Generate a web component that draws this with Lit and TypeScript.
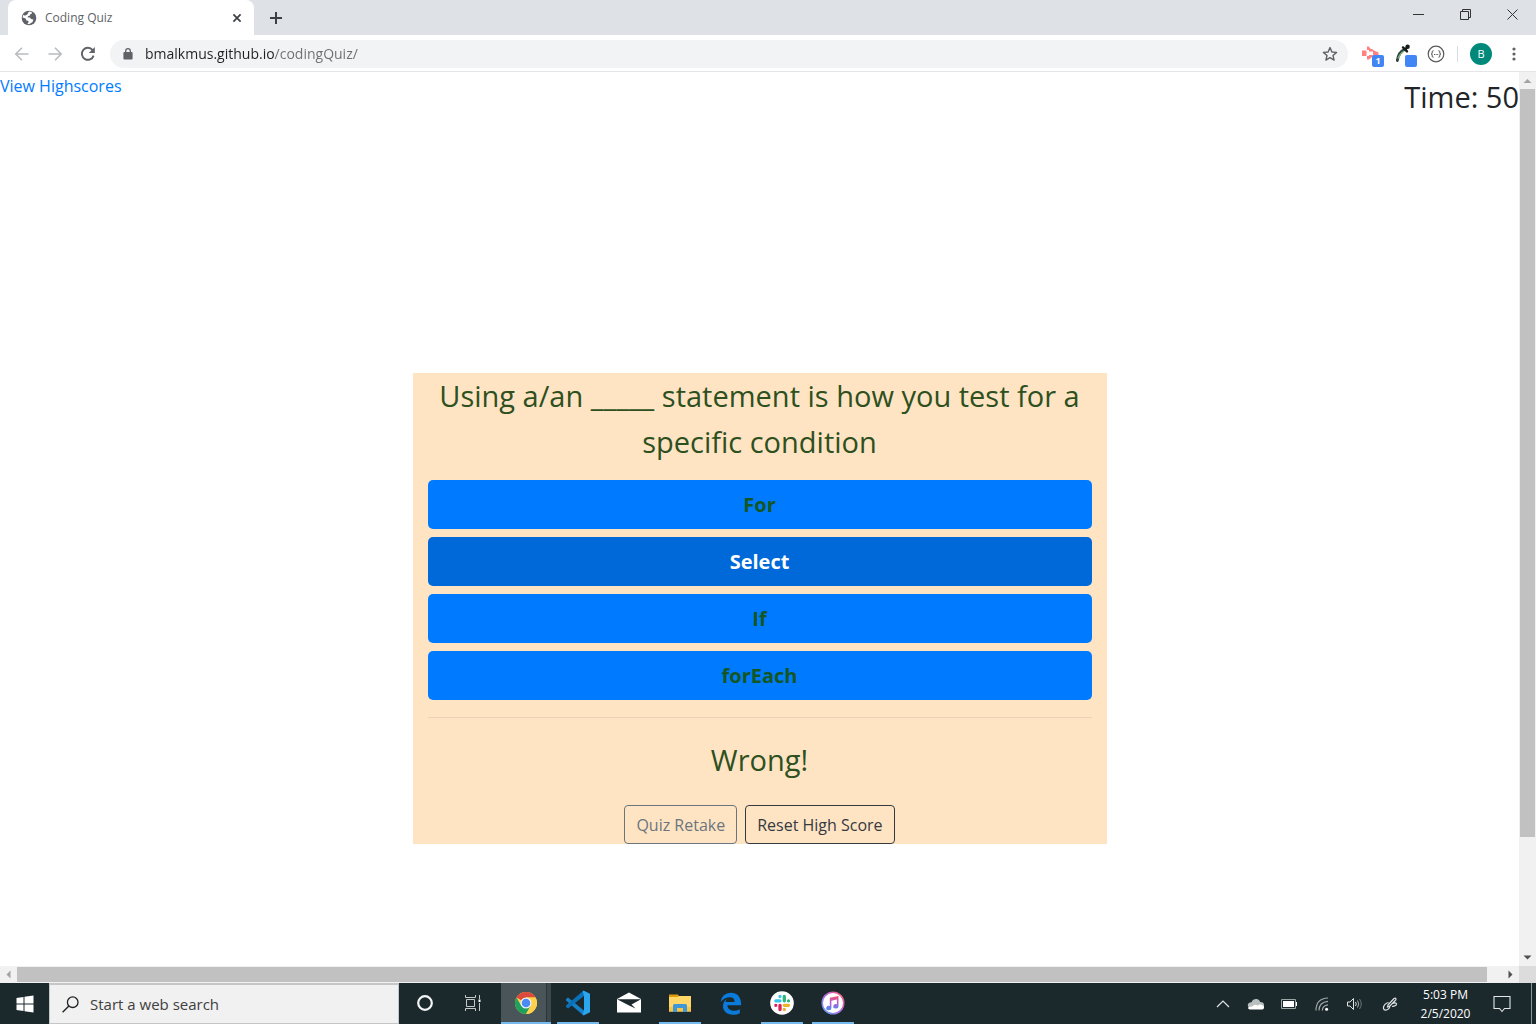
import { LitElement, html, svg, css } from "lit";
import { customElement, property, state } from "lit/decorators.js";
import { classMap } from "lit/directives/class-map.js";

const fontStack = css`"Segoe UI", "Open Sans", "Noto Sans", sans-serif`;

const reset = css`
  * {
    box-sizing: border-box;
  }
  button {
    margin: 0;
    padding: 0;
    border: 0;
    background: none;
    font: inherit;
    color: inherit;
    display: flex;
    align-items: center;
    justify-content: center;
    flex-shrink: 0;
  }
  svg {
    display: block;
    flex-shrink: 0;
    overflow: visible;
  }
`;

@customElement("browser-chrome")
export class BrowserChrome extends LitElement {
  @property() pageTitle = "";
  @property() url = "";

  static styles = [
    reset,
    css`
      :host {
        display: block;
        font-family: ${fontStack};
      }
      .tabs {
        display: flex;
        height: 35px;
        padding-left: 8px;
        background: #dee1e6;
      }
      .tab {
        display: flex;
        align-items: center;
        width: 246px;
        padding: 0 9px 0 13px;
        gap: 8px;
        background: #fff;
        border-radius: 8px 8px 0 0;
        font-size: 12px;
        color: #5f6368;
      }
      .tab-title {
        flex: 1;
      }
      .tab-close,
      .new-tab {
        width: 16px;
      }
      .new-tab {
        margin-left: 14px;
      }
      .window-controls {
        display: flex;
        margin-left: auto;
        height: 29px;
      }
      .window-controls button {
        width: 47px;
      }
      .toolbar {
        display: flex;
        align-items: center;
        height: 37px;
        padding: 1px 12px 0 5px;
        background: #fff;
        border-bottom: 1px solid #e4e5e7;
      }
      .nav {
        width: 33px;
        height: 32px;
      }
      .address {
        display: flex;
        align-items: center;
        flex: 1;
        height: 28px;
        margin-left: 6px;
        padding: 0 10px 0 12px;
        gap: 11px;
        border-radius: 14px;
        background: #f1f3f4;
      }
      .address input {
        flex: 1;
        min-width: 0;
        border: 0;
        padding: 0;
        outline: 0;
        font-family: inherit;
        font-size: 14px;
        line-height: 20px;
        background: linear-gradient(90deg, #202124 129px, #6b6f73 129px);
        background-clip: text;
        -webkit-background-clip: text;
        -webkit-text-fill-color: transparent;
      }
      .extensions {
        display: flex;
        align-items: center;
        gap: 9px;
        padding-left: 13px;
      }
      .divider {
        width: 1px;
        height: 16px;
        margin: 0 3px;
        background: #dadce0;
      }
      .avatar {
        width: 22px;
        height: 22px;
        border-radius: 50%;
        background: #00897b;
        color: #fff;
        font-size: 11px;
      }
      .menu {
        width: 20px;
        margin-left: 3px;
      }
    `,
  ];

  render() {
    return html`
      <div class="tabs">
        <div class="tab">
          <svg width="16" height="16" viewBox="0 0 16 16" aria-hidden="true">
            <circle cx="8" cy="8" r="7.3" fill="#5f6368" />
            <path d="M8.6 1.6 10.6 2 11 3.4 9.2 4.2 9 5.6 7 6.2 6.6 7.4 9 7.6 10 9 12.4 9.4 11.6 12 9.6 13.2 8 14.2 6.4 13.8 7.6 12.2 7.2 10.8 5.4 10.4 4.6 8.6 1.6 7.6 2.2 5 4 5.4 6.4 2.6Z" fill="#fff" />
            <path d="M4 2.8 6.8 1.6 7.4 3 5.6 5 3.6 5.6Z" fill="#5f6368" />
          </svg>
          <span class="tab-title">${this.pageTitle}</span>
          <button class="tab-close" aria-label="Close tab">
            <svg width="10" height="10" viewBox="0 0 10 10">
              <path d="M1.4 1.4 8.6 8.6M8.6 1.4 1.4 8.6" stroke="#3c4043" stroke-width="1.7" />
            </svg>
          </button>
        </div>
        <button class="new-tab" aria-label="New tab">
          <svg width="14" height="14" viewBox="0 0 14 14">
            <path d="M7 1V13M1 7H13" stroke="#3c4043" stroke-width="2" />
          </svg>
        </button>
        <div class="window-controls">
          <button aria-label="Minimize">
            <svg width="11" height="11" viewBox="0 0 11 11"><path d="M0 5.5H11" stroke="#333" /></svg>
          </button>
          <button aria-label="Restore">
            <svg width="11" height="11" viewBox="0 0 11 11">
              <path d="M.5 2.5H8.5V10.5H.5ZM2.5 2.5V.5H10.5V8.5H8.5" fill="none" stroke="#333" />
            </svg>
          </button>
          <button aria-label="Close">
            <svg width="11" height="11" viewBox="0 0 11 11"><path d="M.5 .5 10.5 10.5M10.5 .5 .5 10.5" stroke="#333" /></svg>
          </button>
        </div>
      </div>
      <div class="toolbar">
        <button class="nav" aria-label="Back">
          <svg width="16" height="16" viewBox="0 0 16 16">
            <path d="M14.5 8H2M8 1.8 1.8 8 8 14.2" fill="none" stroke="#babcbe" stroke-width="1.6" />
          </svg>
        </button>
        <button class="nav" aria-label="Forward">
          <svg width="16" height="16" viewBox="0 0 16 16">
            <path d="M1.5 8H14M8 1.8 14.2 8 8 14.2" fill="none" stroke="#babcbe" stroke-width="1.6" />
          </svg>
        </button>
        <button class="nav" aria-label="Reload">
          <svg width="16" height="16" viewBox="0 0 16 16">
            <path d="M13.6 9.6A6 6 0 1 1 12.6 4.1" fill="none" stroke="#5f6368" stroke-width="1.9" />
            <path d="M14.8 1V7H8.8Z" fill="#5f6368" />
          </svg>
        </button>
        <label class="address">
          <svg width="12" height="14" viewBox="0 0 12 14" aria-hidden="true">
            <rect x="1.4" y="5" width="9.2" height="7.6" rx="1" fill="#5f6368" />
            <path d="M3.7 5.5V3.9a2.3 2.3 0 0 1 4.6 0V5.5" fill="none" stroke="#5f6368" stroke-width="1.3" />
          </svg>
          <input type="text" aria-label="Address" .value=${this.url} />
          <svg width="16" height="16" viewBox="0 0 16 16" aria-hidden="true">
            <path d="M8 1.6 9.9 6 14.6 6.4 11 9.5 12.1 14.1 8 11.6 3.9 14.1 5 9.5 1.4 6.4 6.1 6Z" fill="none" stroke="#5f6368" stroke-width="1.4" stroke-linejoin="round" />
          </svg>
        </label>
        <div class="extensions">
          <button aria-label="Screen recorder, 1 notification">
            <svg width="24" height="24" viewBox="0 0 24 24">
              <rect x="1" y="8.500" width="4.500" height="5.500" fill="#ff8080" />
              <path d="M6 8V4.500H8L9 6.500 11 7 13 8.500 17.500 10.500V13H12L11 15 8 17.500H6V14H8V13H12V9.500H8V8Z" fill="#ff8080" />
              <rect x="11" y="13" width="12" height="12" rx="2" fill="#4285f4" />
              <text x="17" y="22.4" text-anchor="middle" font-size="9" font-weight="700" fill="#fff">1</text>
            </svg>
          </button>
          <button aria-label="Color picker">
            <svg width="24" height="24" viewBox="0 0 24 24">
              <path d="M10.500 7.500Q4.500 10 3.300 18.500" fill="none" stroke="#2c4434" stroke-width="2.800" stroke-linecap="round" />
              <path d="M10 9Q5.800 11.500 4 16.500" fill="none" stroke="#7eaa88" stroke-width="1.400" />
              <path d="M9 5.400 13 9.400M11.200 7.400 13.600 5" stroke="#161c18" stroke-width="2.400" stroke-linecap="round" />
              <circle cx="13.600" cy="4.800" r="2.200" fill="#161c18" />
              <rect x="11" y="13" width="12" height="12" rx="2" fill="#4285f4" />
            </svg>
          </button>
          <button aria-label="JSON viewer">
            <svg width="18" height="18" viewBox="0 0 18 18">
              <circle cx="9" cy="9" r="7.8" fill="none" stroke="#5a5a5a" stroke-width="1.2" />
              <path d="M6.6 5.8H6Q5.2 5.8 5.2 6.8V8Q5.2 9 4.2 9 5.2 9 5.2 10V11.2Q5.2 12.2 6 12.2H6.6M11.4 5.8H12Q12.8 5.8 12.8 6.8V8Q12.8 9 13.8 9 12.8 9 12.8 10V11.2Q12.8 12.2 12 12.2H11.4" fill="none" stroke="#555" />
              <path d="M7 9.5H8M8.6 9.5H9.6M10.2 9.5H11.2" stroke="#555" stroke-width="1.2" />
            </svg>
          </button>
          <span class="divider"></span>
          <button class="avatar" aria-label="Profile">B</button>
          <button class="menu" aria-label="Menu">
            <svg width="4" height="16" viewBox="0 0 4 16" fill="#5f6368">
              <circle cx="2" cy="3" r="1.6" /><circle cx="2" cy="8" r="1.6" /><circle cx="2" cy="13" r="1.6" />
            </svg>
          </button>
        </div>
      </div>
    `;
  }
}

interface Quiz {
  question: string;
  choices: string[];
}

@customElement("quiz-page")
export class QuizPage extends LitElement {
  @state() private quiz: Quiz = {
    question: "Using a/an _____ statement is how you test for a specific condition",
    choices: ["For", "Select", "If", "forEach"],
  };
  @state() private picked = 1;
  @state() private seconds = 50;

  static styles = [
    reset,
    css`
      :host {
        display: grid;
        grid-template-rows: 58px 2fr auto 1fr;
        justify-items: center;
        background: #fff;
        color: #212529;
        font-family: ${fontStack};
      }
      .top {
        display: flex;
        justify-content: space-between;
        align-items: flex-start;
        justify-self: stretch;
      }
      .scores {
        color: #007bff;
        font-size: 16px;
        line-height: 28px;
        text-decoration: none;
      }
      .time {
        font-size: 29px;
        line-height: 50px;
      }
      .card {
        grid-row: 3;
        width: 46%;
        max-width: 694px;
        padding: 0 15px;
        background: #ffe4c4;
        color: #2d501e;
        text-align: center;
      }
      .question,
      .verdict {
        margin: 0;
        font-size: 29px;
        font-weight: 400;
        line-height: 46px;
      }
      .choices {
        display: flex;
        flex-direction: column;
        gap: 8px;
        margin-top: 15px;
      }
      .choice {
        height: 49px;
        border-radius: 5px;
        background: #007bff;
        color: #155724;
        font-size: 20px;
        font-weight: 700;
      }
      .picked {
        background: #0069d9;
        color: #fff;
      }
      .rule {
        height: 1px;
        margin: 17px 0 19px;
        border: 0;
        background: #e9d2b7;
      }
      .actions {
        display: flex;
        justify-content: center;
        gap: 8px;
        margin-top: 22px;
      }
      .action {
        height: 39px;
        padding: 0 11px;
        border: 1px solid #343a40;
        border-radius: 4px;
        color: #343a40;
        font-size: 16px;
      }
      .muted {
        border-color: #6c757d;
        color: #6c757d;
      }
    `,
  ];

  render() {
    return html`
      <header class="top">
        <a class="scores" href="#highscores">View Highscores</a>
        <span class="time">Time: ${this.seconds}</span>
      </header>
      <main class="card">
        <h1 class="question">${this.quiz.question}</h1>
        <div class="choices">
          ${this.quiz.choices.map(
            (choice, i) => html`<button
              class=${classMap({ choice: true, picked: i === this.picked })}
              @click=${() => (this.picked = i)}
            >
              ${choice}
            </button>`
          )}
        </div>
        <hr class="rule" />
        <p class="verdict">Wrong!</p>
        <div class="actions">
          <button class="action muted">Quiz Retake</button>
          <button class="action">Reset High Score</button>
        </div>
      </main>
    `;
  }
}

const appIcons = {
  cortana: svg`<circle cx="14" cy="14" r="6.8" fill="none" stroke="#f4f6f6" stroke-width="2.2"/>`,
  taskView: svg`<g fill="none" stroke="#c4caca"><path d="M3.5 6V8.500H13.500V6M3.500 22V19.500H13.500V22"/><path d="M4.500 10.500H12.500V17.500H4.500ZM17.500 6V10M17.500 14V22" /></g><path d="M16.500 10.500H18.500V13H16.500Z" fill="#fff"/>`,
  chrome: svg`<circle cx="14" cy="14" r="11" fill="#ffd04b"/>
    <path d="M14 14 4.470 8.500A11 11 0 0 1 23.530 8.500H14Z" fill="#dc4a3d"/>
    <path d="M4.470 8.500A11 11 0 0 0 14 25L18.800 16.700 14 14 9.200 16.700Z" fill="#1fa15d"/>
    <path d="M23.530 8.500H14V14L18.800 16.700 14 25A11 11 0 0 0 23.530 8.500Z" fill="#ffd04b"/>
    <circle cx="14" cy="14" r="5.500" fill="#f4f4f4"/><circle cx="14" cy="14" r="4.300" fill="#4a8af4"/>`,
  code: svg`<path d="M2 10 4 8.600 20 21.500V25.500L19 26 2 11.500Z" fill="#1580c8"/>
    <path d="M2 18 4 19.400 20 7V2.500L19 2 2 16.500Z" fill="#0a70b8"/>
    <path d="M19.500 1.600 26 4.700V23.300L19.500 26.400 18.700 25.500 20 21V7L18.700 2.500Z" fill="#2aa5ee"/>`,
  mail: svg`<path d="M2 10 14 3.500 26 10V23.500H2Z" fill="#fff"/><path d="M2 10.300H26L16.500 15.500 20.500 19.500 13.600 16.300Z" fill="#1b292d"/>`,
  files: svg`<path d="M3 5.500H12L13.500 8H3Z" fill="#e09b0c"/><path d="M3 8H11.500L13 7H25V22.500H3Z" fill="#ffd767"/>
    <path d="M3 18H25V22.500H3Z" fill="#f6c644"/><path d="M7 23V16.500Q7 15 8.500 15H19.500Q21 15 21 16.500V23H17V19H11V23Z" fill="#3f97d8"/>`,
  edge: svg`<path d="M3.600 13Q4.800 4 14 3.700C21 3.700 24.400 9 24.200 16.300H10.400C10.600 20.500 14 21.800 17 21.800Q20.200 21.800 22.800 20.200V24.200Q19.800 25.800 16 25.700C9.600 25.600 5.800 21.700 6 16.700Q6.200 12.300 10 10 8.600 11.400 8.700 13H17.700Q17.600 8.300 12.900 8.300 7.200 8.300 3.600 13Z" fill="#0b7bdb"/>`,
  slack: svg`<circle cx="14" cy="14" r="11.800" fill="#fff"/><g stroke-width="3.300" stroke-linecap="round">
    <path d="M12 7.500H12M7.800 11.800H12" stroke="#36c5f0"/><path d="M16.300 7.500V11.800M20.500 11.800H20.500" stroke="#2eb67d"/>
    <path d="M16.300 16.300H20.500M16.300 20.500H16.300" stroke="#ecb22e"/><path d="M12 16.300V20.500M7.800 16.300H7.800" stroke="#e01e5a"/></g>`,
  music: svg`<defs><linearGradient id="ring" x1="0" y1="1" x2="1" y2="0"><stop stop-color="#5aa7f5"/><stop offset=".5" stop-color="#b565e8"/><stop offset="1" stop-color="#ff5a60"/></linearGradient>
    <linearGradient id="note" x1="0" y1="0" x2="0" y2="1"><stop stop-color="#f4526f"/><stop offset=".5" stop-color="#b05fd8"/><stop offset="1" stop-color="#4a8ff0"/></linearGradient></defs>
    <circle cx="14" cy="14" r="10.800" fill="#fff" stroke="url(#ring)" stroke-width="1.500"/>
    <path d="M10.800 8.800 19.500 7V17.300A2.600 2.200 0 1 1 17.900 15.300V10.600L12.400 11.700V19A2.600 2.200 0 1 1 10.800 17Z" fill="url(#note)"/>`,
};

type AppIcon = keyof typeof appIcons;

const taskbarApps: { icon: AppIcon; label: string; open?: boolean; active?: boolean }[] = [
  { icon: "cortana", label: "Cortana" },
  { icon: "taskView", label: "Task View" },
  { icon: "chrome", label: "Chrome", active: true },
  { icon: "code", label: "Visual Studio Code", open: true },
  { icon: "mail", label: "Mail" },
  { icon: "files", label: "File Explorer", open: true },
  { icon: "edge", label: "Edge" },
  { icon: "slack", label: "Slack", open: true },
  { icon: "music", label: "iTunes", open: true },
];

const trayIcons = [
  { label: "Hidden icons", art: svg`<path d="M4 13 10 7 16 13" fill="none" stroke="#e0e4e4" stroke-width="1.200"/>` },
  { label: "OneDrive", art: svg`<path d="M5 14Q1 13.500 2 10 3 8 5.500 8.200 7 4.500 11 5 13.500 5.600 14.200 8 18 8 18 11V14Z" fill="#b9bebf"/><path d="M5 15.500Q2 15.500 2 13.500 4 12.500 6 12.500 9 9.500 11.500 11.500 14 10 16 11 18.500 12 18 14 17.500 15.500 16 15.500Z" fill="#fff"/>` },
  { label: "Battery", art: svg`<path d="M2.500 5.500H16.500V14.500H2.500Z" fill="none" stroke="#9da6a7"/><path d="M4 7H15V13H4ZM17 8H18V12H17Z" fill="#fff"/>` },
  { label: "Network", art: svg`<g fill="none" stroke="#9da6a7" stroke-width="1.200"><path d="M4 16.500Q4 4.500 16 4"/><path d="M7 16.500Q7 8 16 7.300"/><path d="M10.300 16.500Q10.500 11.500 16 10.800"/></g><circle cx="14.600" cy="15.200" r="1.500" fill="#fff"/>` },
  { label: "Volume", art: svg`<path d="M2.500 8H5L8.500 4.500V15.500L5 12H2.500Z" fill="none" stroke="#dfe3e3"/><path d="M10.500 8Q12 10 10.500 12" fill="none" stroke="#dfe3e3"/><path d="M12.500 6.500Q15 10 12.500 13.500" fill="none" stroke="#a9b1b2"/><path d="M14.500 5Q18 10 14.500 15" fill="none" stroke="#6d7879"/>` },
  { label: "Windows Ink", art: svg`<path d="M8 11 14 4.500Q15.500 3.500 16 5 16 6 15 6.800L9.500 12.500 7.500 13ZM8.500 8.500Q4.500 9.500 3.500 13 3 16.500 6.500 16 10.500 14.500 9.500 11.500 M12.500 9.500Q16 8 16.500 10 16.500 12 12 12.500" fill="none" stroke="#dfe3e3" stroke-width="1.200"/>` },
];

@customElement("task-bar")
export class TaskBar extends LitElement {
  static styles = [
    reset,
    css`
      :host {
        display: flex;
        height: 41px;
        background: #1b292d;
        color: #fff;
        font-family: ${fontStack};
      }
      .start {
        width: 49px;
      }
      .search {
        display: flex;
        align-items: center;
        width: 350px;
        padding: 0 12px;
        gap: 11px;
        border: 1px solid #c4c6c7;
        border-top-width: 2px;
        background: #f1f1f1;
      }
      .search input {
        flex: 1;
        min-width: 0;
        padding: 0;
        border: 0;
        outline: 0;
        background: none;
        font-family: inherit;
        font-size: 15px;
        line-height: 20px;
      }
      .search input::placeholder {
        color: #404040;
        opacity: 1;
      }
      .app {
        width: 51px;
        flex-direction: column;
        justify-content: flex-start;
      }
      .app svg {
        margin-top: 6px;
      }
      .open::after,
      .active::after {
        content: "";
        width: 42px;
        height: 2px;
        margin-top: auto;
        background: #76b9ed;
      }
      .active {
        background: linear-gradient(90deg, #495558 45px, #27373b 45px, #27373b 46px, #3c484b 46px);
        width: 50px;
        margin-right: 1px;
      }
      .active::after {
        width: 50px;
      }
      .tray {
        display: flex;
        margin-left: auto;
      }
      .tray-button {
        width: 33px;
      }
      .tray-button:nth-child(6) {
        margin-left: 2px;
      }
      .clock {
        flex-direction: column;
        width: 79px;
        font-size: 12px;
        line-height: 19px;
      }
      .notes {
        width: 34px;
      }
      .desktop {
        width: 5px;
        margin-left: 12px;
        border-left: 1px solid #8c9496;
      }
    `,
  ];

  render() {
    return html`
      <button class="start" aria-label="Start">
        <svg width="18" height="18" viewBox="0 0 18 18" fill="#fff">
          <path d="M.5 3 7.500 2V8.500H.5ZM8.500 1.800 17.500.5V8.500H8.500ZM.5 9.500H7.500V16L.5 15ZM8.500 9.500H17.500V17.500L8.500 16.200Z" />
        </svg>
      </button>
      <label class="search">
        <svg width="17" height="17" viewBox="0 0 17 17" aria-hidden="true">
          <circle cx="10.700" cy="6.200" r="5.300" fill="none" stroke="#222" stroke-width="1.300" />
          <path d="M6.900 10 .6 16.300" stroke="#222" stroke-width="1.400" />
        </svg>
        <input type="search" placeholder="Start a web search" aria-label="Search" />
      </label>
      ${taskbarApps.map(
        (app) => html`<button
          class=${classMap({ app: true, open: !!app.open, active: !!app.active })}
          aria-label=${app.label}
        >
          <svg width="28" height="28" viewBox="0 0 28 28">${appIcons[app.icon]}</svg>
        </button>`
      )}
      <div class="tray">
        ${trayIcons.map(
          (item) => html`<button class="tray-button" aria-label=${item.label}>
            <svg width="20" height="20" viewBox="0 0 20 20">${item.art}</svg>
          </button>`
        )}
        <button class="clock"><span>5:03 PM</span><span>2/5/2020</span></button>
        <button class="notes" aria-label="Notifications">
          <svg width="18" height="18" viewBox="0 0 18 18">
            <path d="M1 1.500H17V13.500H11.500L9 16.500 6.500 13.500H1Z" fill="none" stroke="#e3e6e6" stroke-width="1.100" />
          </svg>
        </button>
        <button class="desktop" aria-label="Show desktop"></button>
      </div>
    `;
  }
}

@customElement("app-root")
export class AppRoot extends LitElement {
  static styles = [
    reset,
    css`
      :host {
        display: flex;
        flex-direction: column;
        min-height: 100vh;
      }
      .viewport {
        flex: 1;
        display: grid;
        grid-template: 1fr 17px / 1fr 17px;
      }
      .bar {
        display: flex;
        background: #f1f1f1;
      }
      .bar.vertical {
        flex-direction: column;
      }
      .arrow {
        width: 17px;
        height: 17px;
      }
      .thumb {
        background: #c1c1c1;
      }
      .vertical .thumb {
        flex: 748;
        margin: 0 1px;
      }
      .vertical .rest {
        flex: 112;
      }
      .horizontal .thumb {
        flex: 1470;
        margin: 1px 0;
      }
      .horizontal .rest {
        flex: 15;
      }
      .corner {
        background: #dcdcdc;
      }
    `,
  ];

  private arrow(label: string, d: string, fill: string) {
    return html`<button class="arrow" aria-label=${label}>
      <svg width="17" height="17" viewBox="0 0 17 17"><path d=${d} fill=${fill} /></svg>
    </button>`;
  }

  render() {
    return html`
      <browser-chrome pageTitle="Coding Quiz" url="bmalkmus.github.io/codingQuiz/"></browser-chrome>
      <div class="viewport">
        <quiz-page></quiz-page>
        <div class="bar vertical">
          ${this.arrow("Scroll up", "M4.500 11 8.500 7 12.500 11Z", "#a3a3a3")}
          <div class="thumb"></div>
          <div class="rest"></div>
          ${this.arrow("Scroll down", "M4.500 6.500 8.500 10.500 12.500 6.500Z", "#505050")}
        </div>
        <div class="bar horizontal">
          ${this.arrow("Scroll left", "M10.500 4.500 6.500 8.500 10.500 12.500Z", "#a3a3a3")}
          <div class="thumb"></div>
          <div class="rest"></div>
          ${this.arrow("Scroll right", "M6.500 4.500 10.500 8.500 6.500 12.500Z", "#505050")}
        </div>
        <div class="corner"></div>
      </div>
      <task-bar></task-bar>
    `;
  }
}
